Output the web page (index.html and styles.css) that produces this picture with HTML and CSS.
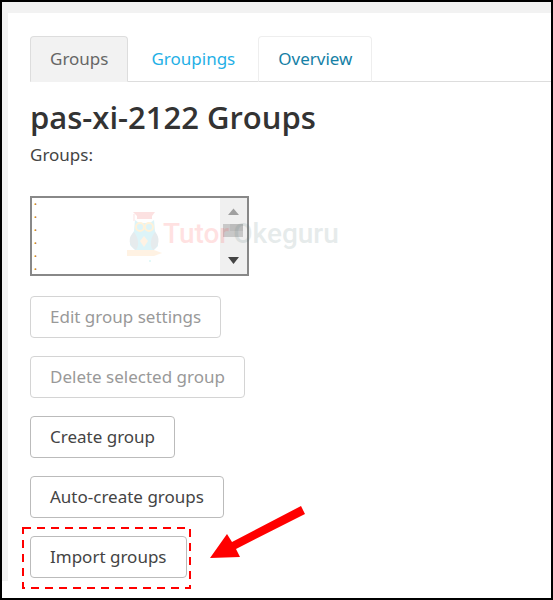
FILE: index.html
```html
<!DOCTYPE html>
<html lang="en">
<head>
  <meta charset="UTF-8">
  <title>pas-xi-2122 Groups</title>
  <link rel="stylesheet" href="styles.css">
</head>
<body>
  <div class="frame">
    <div class="page">
      <main class="card">
        <nav class="tabs">
          <a href="#groups" class="tab active">Groups</a>
          <a href="#groupings" class="tab">Groupings</a>
          <a href="#overview" class="tab hovered">Overview</a>
        </nav>

        <h1>pas-xi-2122 Groups</h1>
        <label for="groups">Groups:</label>

        <div class="list">
          <select id="groups" size="6">
            <option>•</option>
            <option>•</option>
            <option>•</option>
            <option>•</option>
            <option>•</option>
            <option>•</option>
          </select>
          <svg class="scrollbar" width="27" height="76" viewBox="0 0 27 76" aria-hidden="true">
            <rect width="27" height="76" fill="#f0f0f0"/>
            <path d="M8 17L13.500 10.500L19 17Z" fill="#a0a0a0"/>
            <rect x="3" y="26" width="20" height="13" fill="#c8c8c8"/>
            <rect x="10" y="26" width="13" height="7" fill="#bcbcbc"/>
            <path d="M8 59L13.500 66L19 59Z" fill="#444"/>
          </svg>
          <div class="watermark">
            <svg width="36" height="52" viewBox="0 0 36 52" aria-hidden="true">
              <path d="M6 2H28L25 6V9H10V6Z" fill="#e33"/>
              <path d="M7 4V11" stroke="#e33"/>
              <path d="M8 10L12 13H23L27 10L28 21L31 28V36L27 40H8L3 35V28L7 21Z" fill="#19b6d4"/>
              <path d="M7 22C1 27 1 36 9 40C13 35 11 27 7 22ZM28 22C33 27 33 36 26 40C22 35 24 27 28 22Z" fill="#578"/>
              <circle cx="13" cy="17" r="4" fill="#19b6d4" stroke="#fa0" stroke-width="2"/>
              <circle cx="22" cy="17" r="4" fill="#19b6d4" stroke="#fa0" stroke-width="2"/>
              <path d="M17 26L21 31L17 37L13 31Z" fill="#fa4"/>
              <path d="M0 40H27L35 43L27 46H0Z" fill="#fa4"/>
              <circle cx="23" cy="51" r="1" fill="#0cc"/>
            </svg>
            <span class="tutor">Tutor</span>
            <span class="okeguru">Okeguru</span>
          </div>
        </div>

        <div class="actions">
          <button type="button" disabled>Edit group settings</button>
          <button type="button" disabled>Delete selected group</button>
          <button type="button">Create group</button>
          <button type="button">Auto-create groups</button>
          <div class="callout">
            <button type="button">Import groups</button>
            <svg class="outline" aria-hidden="true"><rect x="1" y="1" width="167" height="60"/></svg>
            <svg class="arrow" width="96" height="54" viewBox="0 0 96 54" aria-hidden="true">
              <path d="M0 52L17 28L22 36L91 0L95 8L26 43L30 51Z" fill="#f00"/>
            </svg>
          </div>
        </div>
      </main>
    </div>
  </div>
</body>
</html>
```

FILE: styles.css
```css
* {
  box-sizing: border-box;
}
body {
  margin: 0;
  font-family: "Noto Sans", "Open Sans", sans-serif;
  font-size: 17px;
  line-height: 24px;
  color: #444;
  background: #fff;
}
.frame {
  min-height: 100vh;
  border: 2px solid #000;
}
.page {
  padding: 11px 0 0 6px;
  background: #f2f2f2;
}
.card {
  padding: 23px 0 3px 22px;
  background: #fff;
}
.tabs {
  display: flex;
  gap: 3px;
  border-bottom: 1px solid #ddd;
}
.tab {
  padding: 10px 19px;
  margin-bottom: -1px;
  border: 1px solid transparent;
  border-radius: 4px 4px 0 0;
  color: #1fb0e6;
  text-decoration: none;
}
.tab.active {
  border-color: #ddd;
  border-bottom-color: #f2f2f2;
  background: #f2f2f2;
  color: #666;
}
.tab.hovered {
  border-color: #eee #eee #ddd;
  color: #1580a5;
}
h1 {
  margin: 15px 0 6px;
  font-family: "Open Sans", sans-serif;
  font-size: 31px;
  font-weight: 600;
  line-height: 40px;
  color: #333;
}
label {
  display: block;
}
.list {
  position: relative;
  width: 219px;
  margin: 29px 0 20px;
}
select {
  display: block;
  width: 100%;
  height: 80px;
  padding: 0;
  border: 2px solid #888;
  border-radius: 0;
  outline: none;
  overflow: hidden;
  background: #fff;
  font: 8px "Open Sans", sans-serif;
}
option {
  min-height: 13px;
  padding: 0 2px;
  color: #c8841c;
}
.scrollbar {
  position: absolute;
  top: 2px;
  right: 2px;
}
.watermark {
  position: absolute;
  top: 14px;
  left: 97px;
  display: flex;
  opacity: 0.14;
  font: 500 28px/48px Roboto, sans-serif;
  pointer-events: none;
}
.tutor {
  color: #f33;
}
.okeguru {
  margin-left: 4px;
  color: #577;
}
.actions {
  display: flex;
  flex-direction: column;
  align-items: flex-start;
  gap: 18px;
}
button {
  height: 42px;
  padding: 0 19px;
  border: 1px solid #bbb;
  border-radius: 4px;
  background: #fff;
  font: inherit;
  color: #444;
}
button:disabled {
  border-color: #d4d4d4;
  color: #999;
}
.callout {
  position: relative;
  display: flex;
}
.outline {
  position: absolute;
  top: -9px;
  left: -8px;
  width: 169px;
  height: 62px;
  pointer-events: none;
}
.outline rect {
  fill: none;
  stroke: #f00;
  stroke-width: 2;
  stroke-dasharray: 8 6;
}
.arrow {
  position: absolute;
  top: -30px;
  left: 180px;
}
```
